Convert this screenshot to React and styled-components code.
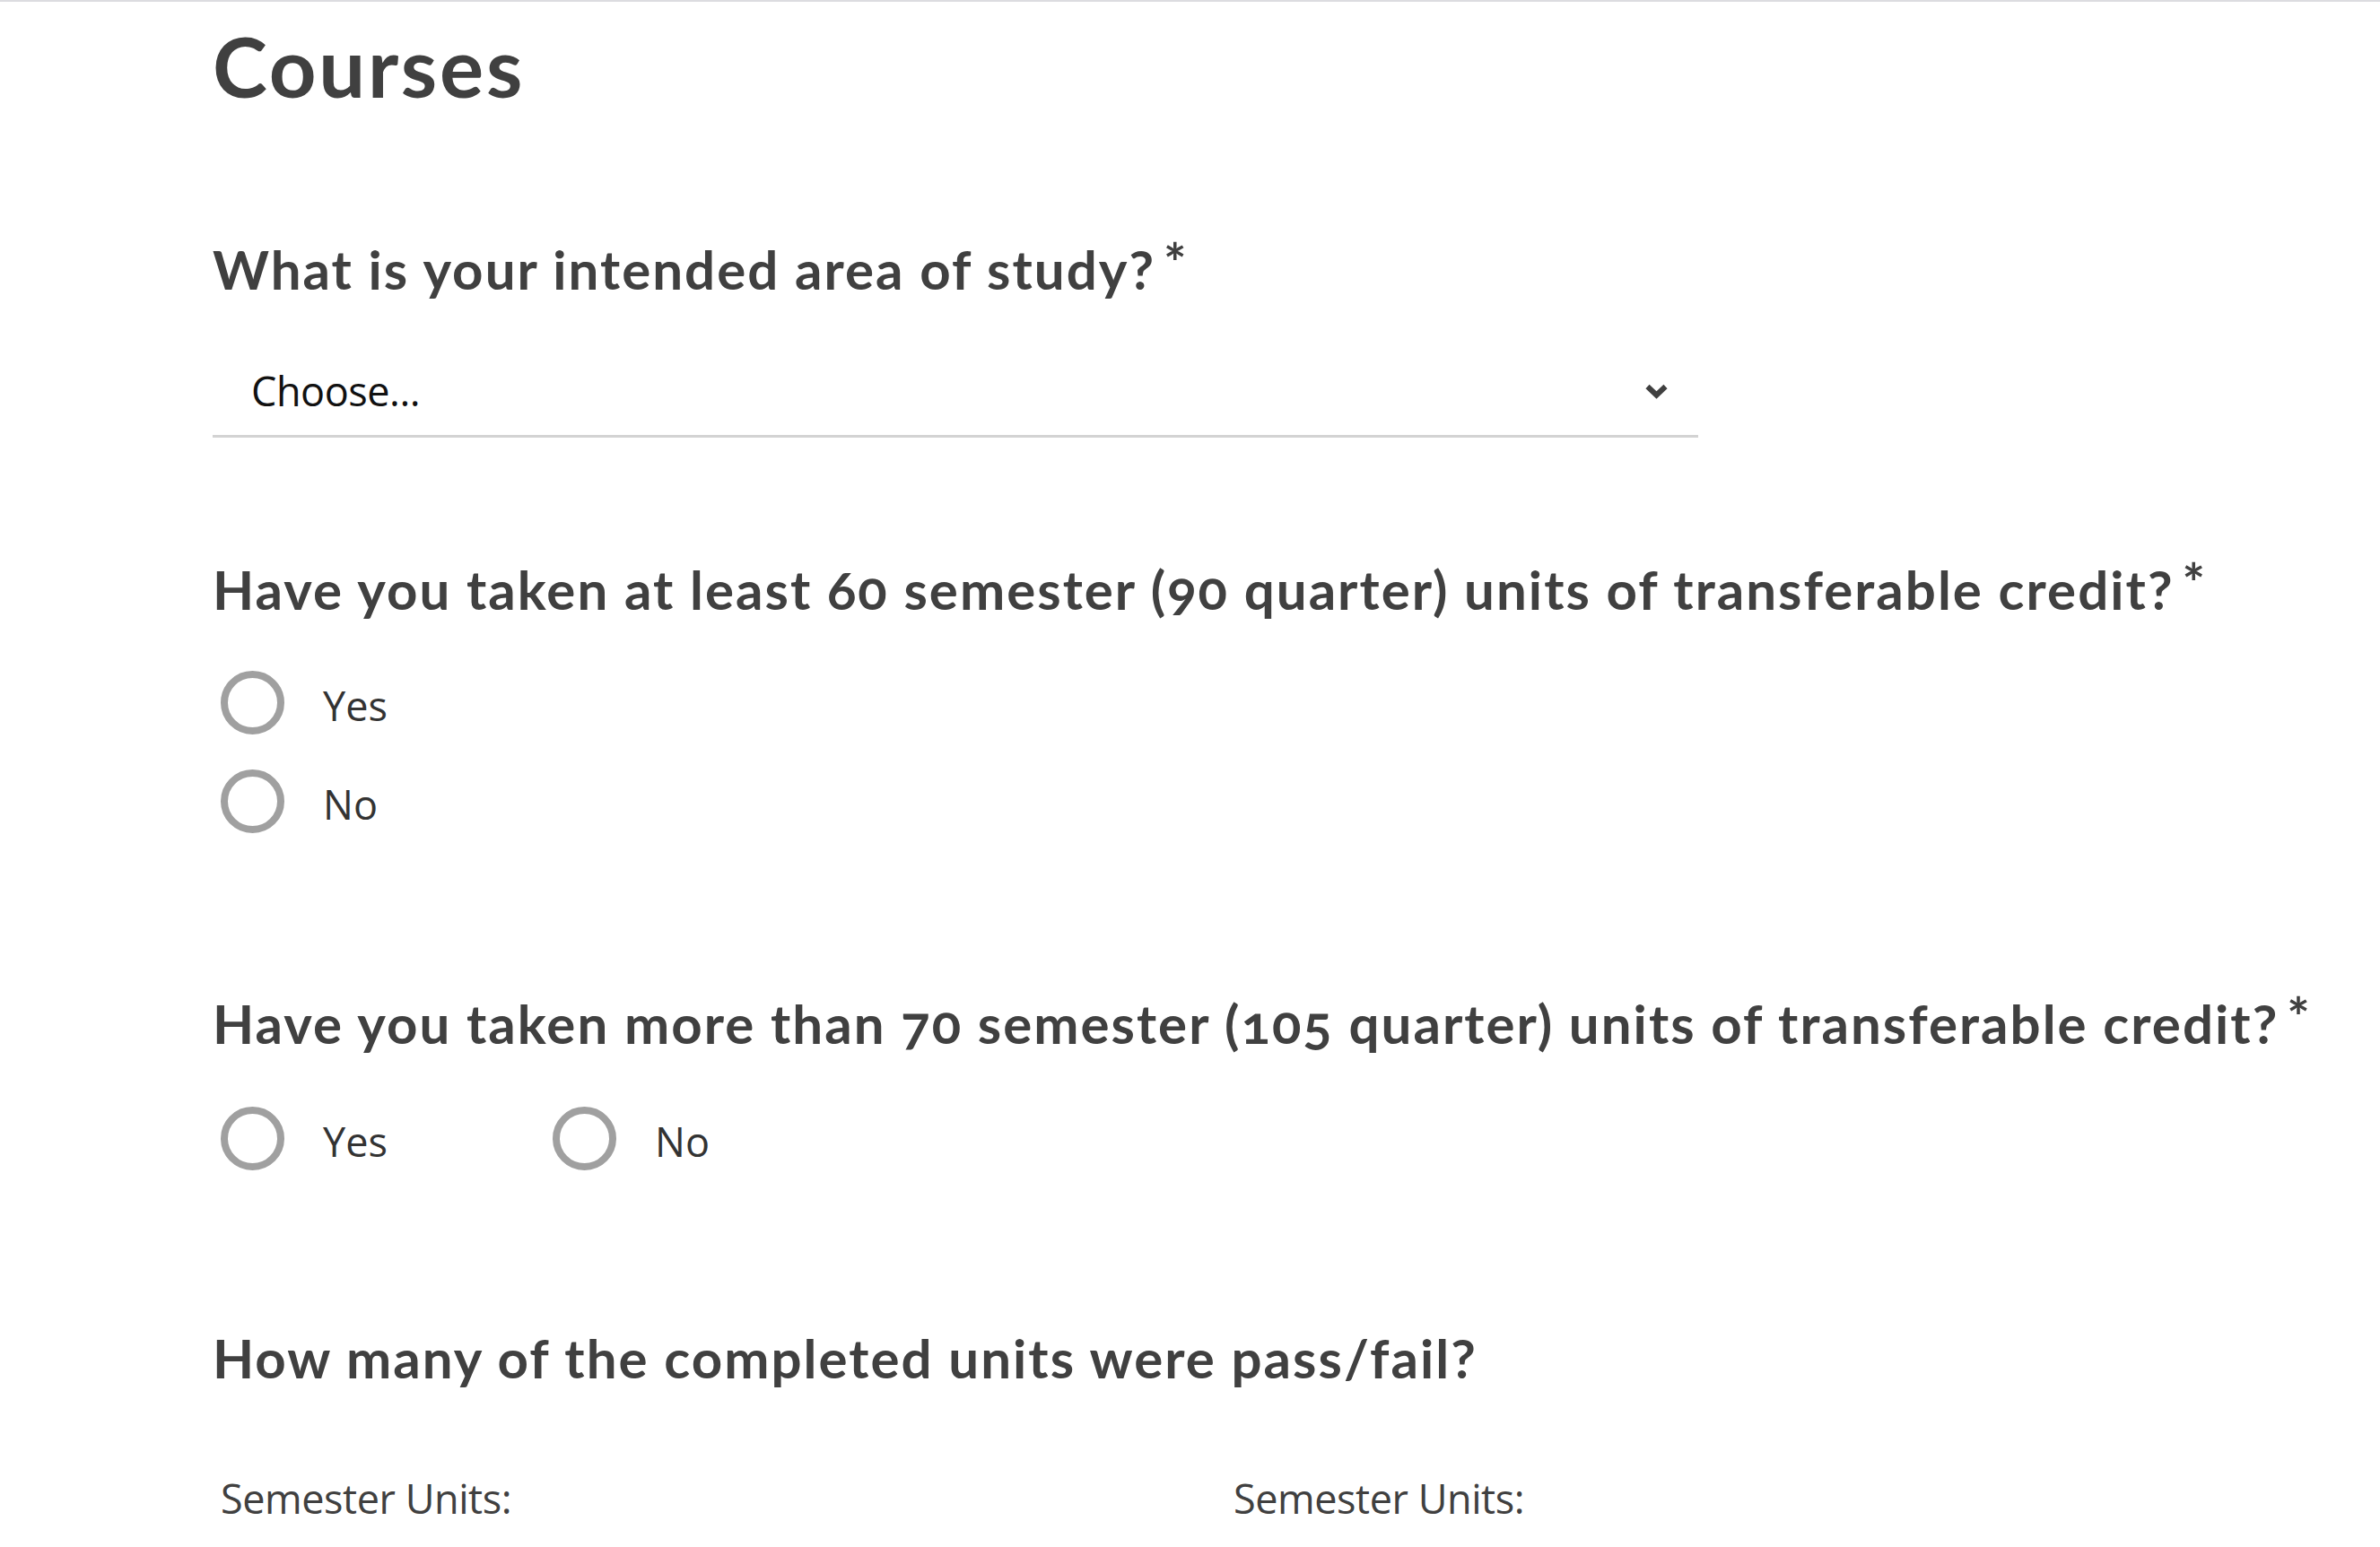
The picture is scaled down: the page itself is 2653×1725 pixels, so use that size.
import styled, { createGlobalStyle } from 'styled-components';

const GlobalStyle = createGlobalStyle`
  html, body {
    margin: 0;
    padding: 0;
    background: #fff;
  }

  body {
    font-family: "Open Sans", "Noto Sans", sans-serif;
    color: #333;
  }
`;

const Page = styled.main`
  box-sizing: border-box;
  min-height: 1725px;
  padding-left: 237px;
  border-top: 2px solid #dcdce0;
`;

const Title = styled.h1`
  margin: 17px 0 0;
  font-family: Lato, "Open Sans", sans-serif;
  font-weight: 700;
  font-size: 92px;
  line-height: 1.2;
  letter-spacing: 0.03em;
  color: #404040;
`;

const Question = styled.h2`
  margin: ${(props) => props.$gap}px 0 0;
  font-family: Lato, "Open Sans", sans-serif;
  font-weight: 700;
  font-size: 60px;
  line-height: 72px;
  letter-spacing: 0.034em;
  color: #404040;
  font-variant-numeric: oldstyle-nums;
`;

const Required = styled.span`
  margin-left: 9px;
  line-height: 0;
  vertical-align: 8px;
`;

const Dropdown = styled.button`
  box-sizing: border-box;
  display: flex;
  align-items: center;
  justify-content: space-between;
  width: 1656px;
  margin-top: 54px;
  padding: 16px 33px 19px 43px;
  border: none;
  border-bottom: 3px solid #d3d3d3;
  background: none;
  font-family: "Open Sans", "Noto Sans", sans-serif;
  font-size: 45px;
  line-height: 60px;
  letter-spacing: -0.01em;
  color: #111;
  text-align: left;
  cursor: pointer;
`;

const Chevron = styled.svg`
  width: 27px;
  height: 17px;
  overflow: visible;
`;

const RadioGroup = styled.div`
  display: flex;
  flex-direction: ${(props) => (props.$inline ? 'row' : 'column')};
  gap: ${(props) => (props.$inline ? 0 : 39)}px;
  margin-top: ${(props) => props.$gap}px;
`;

const Option = styled.label`
  display: flex;
  align-items: center;
  width: ${(props) => (props.$inline ? '370px' : 'auto')};
  height: 71px;
  cursor: pointer;
`;

const Circle = styled.span`
  box-sizing: border-box;
  flex: none;
  width: 71px;
  height: 71px;
  margin: 0 43px 0 9px;
  border: 8px solid #a0a0a0;
  border-radius: 50%;
`;

const OptionText = styled.span`
  padding-top: 7px;
  font-size: 45px;
  line-height: 60px;
  color: #333;
`;

const UnitsRow = styled.div`
  display: grid;
  grid-template-columns: 1129px 1129px;
  margin-top: 91px;
  padding-left: 9px;
`;

const UnitsLabel = styled.span`
  font-size: 45px;
  line-height: 60px;
  letter-spacing: -0.01em;
  color: #404040;
`;

function Radios({ options, inline, gap }) {
  return (
    <RadioGroup $inline={inline} $gap={gap}>
      {options.map((option) => (
        <Option key={option} $inline={inline}>
          <Circle />
          <OptionText>{option}</OptionText>
        </Option>
      ))}
    </RadioGroup>
  );
}

export default function App() {
  return (
    <>
      <GlobalStyle />
      <Page>
        <Title>Courses</Title>

        <Question $gap={135}>
          What is your intended area of study?<Required>*</Required>
        </Question>
        <Dropdown type="button">
          <span>Choose...</span>
          <Chevron viewBox="0 0 27 17">
            <polyline
              points="3.5,3 13.5,12.5 23.5,3"
              fill="none"
              stroke="#404040"
              strokeWidth="6"
            />
          </Chevron>
        </Dropdown>

        <Question $gap={133}>
          Have you taken at least 60 semester (90 quarter) units of transferable credit?
          <Required>*</Required>
        </Question>
        <Radios options={['Yes', 'No']} gap={55} />

        <Question $gap={176}>
          Have you taken more than 70 semester (105 quarter) units of transferable credit?
          <Required>*</Required>
        </Question>
        <Radios options={['Yes', 'No']} inline gap={57} />

        <Question $gap={173}>How many of the completed units were pass/fail?</Question>
        <UnitsRow>
          <UnitsLabel>Semester Units:</UnitsLabel>
          <UnitsLabel>Semester Units:</UnitsLabel>
        </UnitsRow>
      </Page>
    </>
  );
}
